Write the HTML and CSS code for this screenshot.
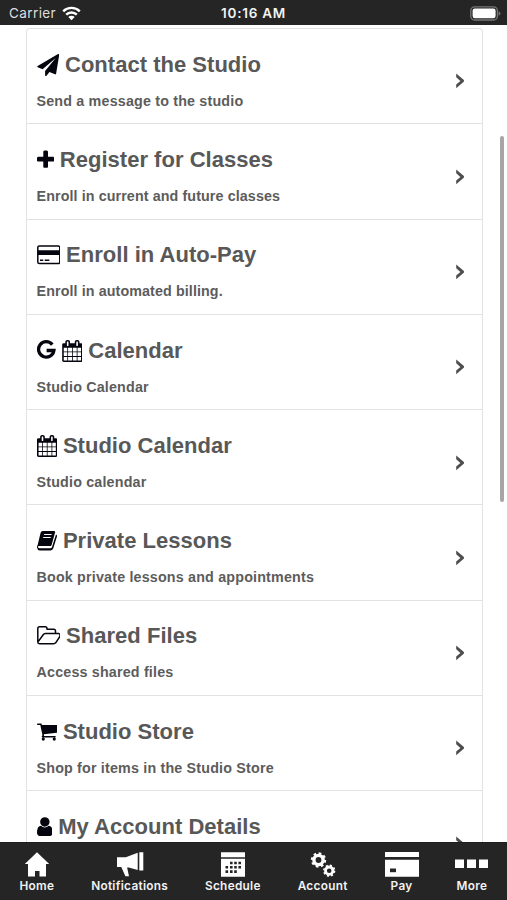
FILE: index.html
```html
<!DOCTYPE html>
<html lang="en">
<head>
<meta charset="utf-8">
<title>Studio</title>
<link rel="stylesheet" href="styles.css">
</head>
<body>
<svg class="defs" aria-hidden="true">
  <symbol id="calendar" viewBox="64 0 1664 1792"><path d="M192 1664h288v-288h-288v288zm352 0h320v-288h-320v288zm-352-352h288v-320h-288v320zm352 0h320v-320h-320v320zm-352-384h288v-288h-288v288zm736 736h320v-288h-320v288zm-384-736h320v-288h-320v288zm768 736h288v-288h-288v288zm-384-352h320v-320h-320v320zm-352-864v-288q0-13-9.5-22.5t-22.5-9.5h-64q-13 0-22.5 9.500t-9.500 22.500v288q0 13 9.500 22.500t22.500 9.500h64q13 0 22.500-9.500t9.500-22.500zm736 864h288v-320h-288v320zm-384-384h320v-288h-320v288zm384 0h288v-288h-288v288zm32-480v-288q0-13-9.500-22.500t-22.500-9.500h-64q-13 0-22.500 9.500t-9.500 22.500v288q0 13 9.500 22.500t22.500 9.500h64q13 0 22.500-9.500t9.500-22.500zm384-64v1280q0 52-38 90t-90 38h-1408q-52 0-90-38t-38-90v-1280q0-52 38-90t90-38h128v-96q0-66 47-113t113-47h64q66 0 113 47t47 113v96h384v-96q0-66 47-113t113-47h64q66 0 113 47t47 113v96h128q52 0 90 38t38 90z"/></symbol>
  <symbol id="chevron" viewBox="0 0 10 16"><path d="M1.200 .6 8.900 7 9 8.600 1.200 15.200V11.500L5.400 7.900 1.200 4.300z" fill="#4e4e4e"/></symbol>
</svg>
<div class="screen">
  <header class="status">
    <div class="carrier">Carrier
      <svg width="19" height="15" viewBox="0 0 19 15"><g fill="none" stroke="#fff" stroke-width="2.4"><path d="M1.200 5.300a11.800 11.800 0 0 1 16.600 0"/><path d="M4.200 8.700a7.500 7.500 0 0 1 10.600 0"/></g><path d="M9.500 14.300 6.300 11a4.500 4.500 0 0 1 6.400 0z" fill="#fff"/></svg>
    </div>
    <div class="time">10:16 AM</div>
    <div class="power"><svg width="31" height="15" viewBox="0 0 31 15"><rect x=".8" y=".8" width="26.600" height="13.200" rx="3.800" fill="none" stroke="#777" stroke-width="1.300"/><rect x="2.600" y="2.600" width="23" height="9.600" rx="2.200" fill="#fff"/><path d="M28.600 5.200q1.900.7 1.900 2.300t-1.900 2.300z" fill="#777"/></svg></div>
  </header>
  <main class="content">
    <ul class="list">
      <li class="row"><div class="info"><h2><svg width="22.500" height="22" viewBox="0 0 1792 1792"><path d="M1764 11q33 24 27 64l-256 1536q-5 29-32 45-14 8-31 8-11 0-24-5l-453-185-242 295q-18 23-49 23-13 0-22-4-19-7-30.500-23.500t-11.500-36.500v-349l864-1059-1069 925-395-162q-37-14-40-55-2-40 32-59l1664-960q15-9 32-9 20 0 36 11z"/></svg>Contact the Studio</h2><p>Send a message to the studio</p></div><svg class="chevron"><use href="#chevron"/></svg></li>
      <li class="row"><div class="info"><h2><svg width="17.300" height="22" viewBox="192 0 1408 1792"><path d="M1600 736v192q0 40-28 68t-68 28h-416v416q0 40-28 68t-68 28h-192q-40 0-68-28t-28-68v-416h-416q-40 0-68-28t-28-68v-192q0-40 28-68t68-28h416v-416q0-40 28-68t68-28h192q40 0 68 28t28 68v416h416q40 0 68 28t28 68z"/></svg>Register for Classes</h2><p class="tight">Enroll in current and future classes</p></div><svg class="chevron"><use href="#chevron"/></svg></li>
      <li class="row"><div class="info"><h2><svg width="23.600" height="22" viewBox="0 0 23.600 22"><rect x=".8" y="2" width="22" height="17.600" rx="1.600" fill="none" stroke="#05050f" stroke-width="1.500"/><path d="M.8 6.200h22v4.800H.8zM3 15.500h3.200v1.500H3zM7.700 15.500h4.600v1.500H7.700z"/></svg>Enroll in Auto-Pay</h2><p class="tight">Enroll in automated billing.</p></div><svg class="chevron"><use href="#chevron"/></svg></li>
      <li class="row"><div class="info"><h2><svg width="19" height="22" viewBox="0 0 19 22"><path d="M15.300 4.600A7.700 7.700 0 1 0 16.900 10.500H9.600" fill="none" stroke="#05050f" stroke-width="3.300"/></svg><svg width="20.800" height="22"><use href="#calendar"/></svg>Calendar</h2><p>Studio Calendar</p></div><svg class="chevron"><use href="#chevron"/></svg></li>
      <li class="row"><div class="info"><h2><svg width="20.400" height="22"><use href="#calendar"/></svg>Studio Calendar</h2><p>Studio calendar</p></div><svg class="chevron"><use href="#chevron"/></svg></li>
      <li class="row"><div class="info"><h2><svg width="20.400" height="22" viewBox="0 0 20.400 22"><path d="M5.700.9h11.200q1.700 0 1.200 1.700l-3.500 12.300q-.4 1.200-1.800 1.200H2.200q-1.300 0-1.300 1 0 1.100 1.500 1.100h11q1.200 0 1.600-1.200L19 4.600q1.400.6.900 2.100l-3.600 11.600q-.7 2.100-2.700 2.100H2.800Q.4 20.200 0 17.400q0-1.400.8-3L3.600 2.700Q4.100 1.100 5.700.9z"/><path d="M7.100 4.500h7.500M6.200 7.500h7.500" stroke="#fff" stroke-width="1.200"/></svg>Private Lessons</h2><p>Book private lessons and appointments</p></div><svg class="chevron"><use href="#chevron"/></svg></li>
      <li class="row"><div class="info"><h2><svg width="23.600" height="22" viewBox="0 0 23.600 22"><path d="M18.500 8.600V6.100q0-1.800-1.800-1.800H10V3.500q0-1.700-1.700-1.700H2.500Q.8 1.800.8 3.500V17q0 1.700 1.700 1.700h14.200q1.100 0 2-.9l3.700-5.600Q23.800 9.400 21.900 8.600H8.300q-1.300.1-2.100 1.100L1.400 16.400" fill="none" stroke="#05050f" stroke-width="1.500" stroke-linejoin="round"/></svg>Shared Files</h2><p>Access shared files</p></div><svg class="chevron"><use href="#chevron"/></svg></li>
      <li class="row"><div class="info"><h2><svg width="20.400" height="22" viewBox="64 60 1664 1792"><path d="M704 1536q0 52-38 90t-90 38-90-38-38-90 38-90 90-38 90 38 38 90zm896 0q0 52-38 90t-90 38-90-38-38-90 38-90 90-38 90 38 38 90zm128-1088v512q0 24-16.500 42.500t-40.500 21.500l-1044 122q13 60 13 70 0 16-24 64h920q26 0 45 19t19 45-19 45-45 19h-1024q-26 0-45-19t-19-45q0-11 8-31.500t16-36 21.500-40 15.500-29.500l-177-823h-204q-26 0-45-19t-19-45 19-45 45-19h256q16 0 28.500 6.500t19.500 15.500 13 24.500 8 26 5.500 29.500 4.500 26h1201q26 0 45 19t19 45z"/></svg>Studio Store</h2><p>Shop for items in the Studio Store</p></div><svg class="chevron"><use href="#chevron"/></svg></li>
      <li class="row"><div class="info"><h2><svg width="15.700" height="22" viewBox="256 30 1280 1792"><path d="M1536 1399q0 109-62.500 187t-150.500 78h-854q-88 0-150.500-78t-62.500-187q0-85 8.500-160.500t31.500-152 58.500-131 94-89 134.500-34.500q131 128 313 128t313-128q76 0 134.500 34.500t94 89 58.500 131 31.500 152 8.500 160.500zm-256-887q0 159-112.500 271.500t-271.500 112.500-271.500-112.500-112.500-271.500 112.500-271.500 271.500-112.500 271.500 112.500 112.500 271.500z"/></svg>My Account Details</h2></div><svg class="chevron"><use href="#chevron"/></svg></li>
    </ul>
    <div class="scrollbar"></div>
  </main>
  <nav class="tabs">
    <a class="tab"><svg width="26" height="26" viewBox="0 0 26 26"><path d="M13 .3 25.200 12H22V24.500H15.500V19H11V24.500H4V12H.8z"/></svg>Home</a>
    <a class="tab"><svg width="28" height="26" viewBox="0 0 28 26"><path d="M1 5.200h8.800L21.700.7v17.300l-9-2.500h-1.600L13 24.200h-3.600L5.300 15H1zM23.300.2h4v18.300h-4z"/></svg>Notifications</a>
    <a class="tab"><svg width="24" height="26" viewBox="0 0 24 26"><path d="M0 .3h24v5H0zM0 6.800h24v18H0z"/><path d="M9 9.700h2.600v2.600H9zm4.200 0h2.600v2.600h-2.600zm4.200 0H20v2.600h-2.600zM4.500 14h2.600v2.600H4.500zm4.500 0h2.600v2.600H9zm4.200 0h2.600v2.600h-2.600zm4.200 0H20v2.600h-2.600zM4.500 18.300h2.600v2.600H4.500zm4.500 0h2.600v2.600H9zm4.200 0h2.600v2.600h-2.600z" fill="#252525"/></svg>Schedule</a>
    <a class="tab"><svg width="26" height="26" viewBox="0 0 26 26"><g fill="none" stroke="#fff"><circle cx="8.500" cy="8" r="4.600" stroke-width="3.400"/><circle cx="8.500" cy="8" r="6.700" stroke-width="2" stroke-dasharray="2.630 2.632"/><circle cx="19.200" cy="18.700" r="3.700" stroke-width="2.800"/><circle cx="19.200" cy="18.700" r="5.300" stroke-width="1.700" stroke-dasharray="2.080 2.083"/></g></svg>Account</a>
    <a class="tab"><svg width="34" height="26" viewBox="0 0 34 26"><path d="M0 0h34v5H0zM0 7.700h34v17H0z"/><path d="M5 16.500h6v3.700H5z" fill="#252525"/></svg>Pay</a>
    <a class="tab"><svg width="33" height="26" viewBox="0 0 33 26"><path d="M0 7.500h9v8.500H0zM12 7.500h9v8.500h-9zM24 7.500h9v8.500h-9z"/></svg>More</a>
  </nav>
</div>
</body>
</html>
```
FILE: styles.css
```css
* { box-sizing: border-box; margin: 0; padding: 0; }
body { background: #fff; font-family: "Liberation Sans", Arial, sans-serif; }
svg { display: block; flex: none; }
.defs { position: absolute; width: 0; height: 0; }
.screen { display: flex; flex-direction: column; height: 900px; overflow: hidden; }

.status {
  flex: none;
  display: grid;
  grid-template-columns: 1fr auto 1fr;
  align-items: center;
  height: 25px;
  padding: 1px 6px 0 9px;
  background: #252525;
  color: #f2f2f2;
  font: 500 13.500px/20px Inter, sans-serif;
}
.carrier { display: flex; align-items: center; gap: 6px; font-weight: 400; letter-spacing: .4px; color: #dedede; }
.time { margin-right: 3px; font-weight: 600; letter-spacing: .75px; }
.power { justify-self: end; }

.content { position: relative; flex: 1; min-height: 0; overflow: hidden; padding: 3px 24.500px 0 25.500px; }
.list { list-style: none; border: 1px solid #e2e2e2; border-bottom: 0; border-radius: 4px 4px 0 0; }
.row {
  display: flex;
  justify-content: space-between;
  height: 95.300px;
  padding: 22.700px 17px 0 10px;
  border-bottom: 1px solid #e2e2e2;
}
h2 { display: flex; align-items: center; gap: 6px; font-size: 22px; line-height: 26px; letter-spacing: .02px; color: #585858; white-space: nowrap; }
h2 svg { fill: #05050f; }
p { margin-top: 15px; font-size: 14.300px; font-weight: 700; line-height: 16px; letter-spacing: .18px; color: #5c5c5c; }
.tight { letter-spacing: .1px; }
.chevron { width: 10px; height: 16px; margin-top: 21.700px; }
.scrollbar { position: absolute; top: 111px; right: 3px; width: 4px; height: 366px; border-radius: 2px; background: #a6a6a6; }

.tabs {
  flex: none;
  display: flex;
  justify-content: space-between;
  height: 58.500px;
  padding: 9.500px 18.500px 0 19.500px;
  background: #252525;
  border-top: 1px solid #1c1f1e;
}
.tab { display: flex; flex-direction: column; align-items: center; color: #f2f2f2; font: 600 11.800px/16px Inter, sans-serif; letter-spacing: .3px; }
.tab svg { fill: #fff; }
```
